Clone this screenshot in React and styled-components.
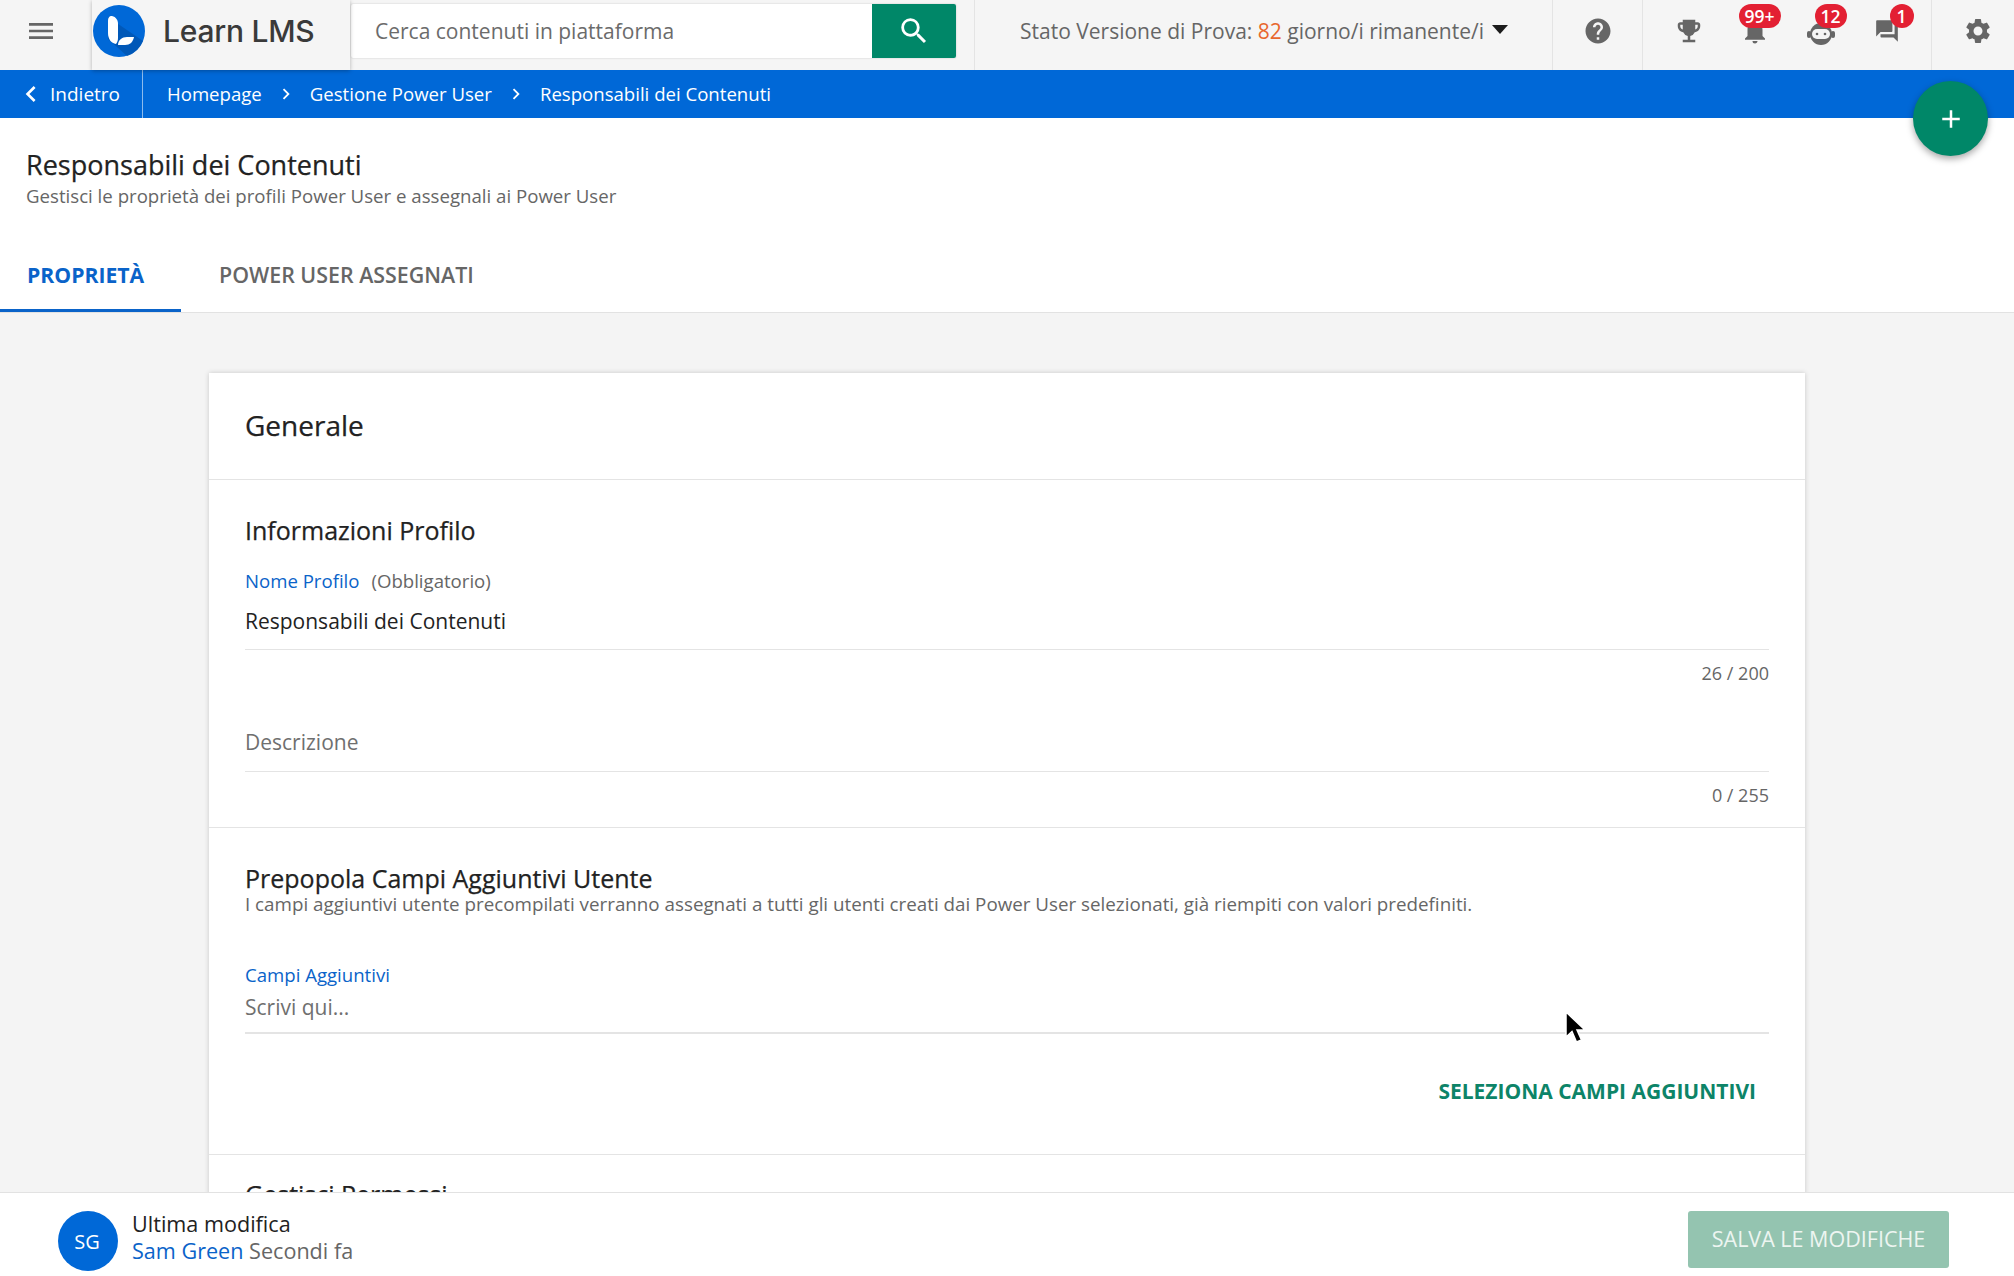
import React from "react";
import styled, { createGlobalStyle, css } from "styled-components";
import {
  MdMenu, MdSearch, MdChevronLeft, MdChevronRight, MdAdd, MdHelp,
  MdEmojiEvents, MdNotifications, MdQuestionAnswer, MdSettings,
} from "react-icons/md";

const Global = createGlobalStyle`
  html, body { margin: 0; padding: 0; height: 100%; }
  body { font-family: "Open Sans", "Liberation Sans", sans-serif; background: #fff; color: #222; }
  * { box-sizing: border-box; }
`;

const headingInk = css`
  font-weight: 500;
  -webkit-text-stroke: 0.25px #222;
  color: #222;
`;

const Page = styled.div`
  position: relative;
  display: flex;
  flex-direction: column;
  width: 100%;
  height: 1276px;
  overflow: hidden;
`;

/* ---------- top bar ---------- */
const TopBar = styled.header`
  display: flex;
  align-items: stretch;
  height: 70px;
  flex: none;
  background: #f5f5f5;
`;
const MenuCell = styled.div`
  width: 92px;
  display: flex;
  align-items: center;
  padding: 0 0 8px 25px;
  color: #666;
`;
const LogoBox = styled.div`
  position: relative;
  z-index: 2;
  width: 258px;
  height: 70px;
  background: #f5f5f5;
  display: flex;
  align-items: center;
  gap: 18px;
  padding: 0 0 8px 1px;
  box-shadow: 0 1px 4px rgba(0, 0, 0, 0.28);
`;
const LogoText = styled.span`
  font-family: Inter, "Open Sans", sans-serif;
  font-size: 30px;
  font-weight: 500;
  letter-spacing: -0.25px;
  color: #3a3a3a;
`;
const SearchForm = styled.div`
  display: flex;
  align-self: flex-start;
  width: 605px;
  height: 54px;
  margin: 4px 0 0 1px;
  background: #fff;
  box-shadow: 0 0 2px rgba(0, 0, 0, 0.2);
  border-radius: 2px;
`;
const SearchText = styled.div`
  flex: 1;
  display: flex;
  align-items: center;
  padding-left: 24px;
  font-size: 21px;
  color: #6b6b6b;
`;
const SearchButton = styled.div`
  width: 84px;
  display: flex;
  align-items: center;
  justify-content: center;
  background: #008768;
  color: #fff;
  border-radius: 0 2px 2px 0;
`;
const Trial = styled.div`
  margin-left: 18px;
  width: 578px;
  border-left: 1px solid #e4e4e4;
  display: flex;
  align-items: center;
  padding: 0 0 9px 45px;
  font-size: 21px;
  color: #666;
  white-space: pre;
`;
const Days = styled.span`
  color: #e8672e;
`;
const Caret = styled.span`
  width: 0;
  height: 0;
  margin-left: 8px;
  margin-bottom: 2px;
  border-left: 8px solid transparent;
  border-right: 8px solid transparent;
  border-top: 9px solid #1c1c1c;
`;
const IconGroup = styled.div`
  width: ${(p) => p.$w}px;
  border-left: 1px solid #e4e4e4;
  display: flex;
  align-items: center;
  justify-content: center;
  color: #666;
  padding-bottom: 8px;
  padding-left: ${(p) => p.$pl || 0}px;
`;
const IconCell = styled.div`
  position: relative;
  width: 66px;
  height: 62px;
  display: flex;
  align-items: center;
  justify-content: center;
`;
const RobotFace = styled.svg`
  margin-top: 5px;
`;
const Badge = styled.span`
  position: absolute;
  top: 4px;
  left: ${(p) => p.$left}px;
  min-width: 24px;
  height: 24px;
  padding: 0 6px;
  border-radius: 12px;
  background: #e32033;
  color: #fff;
  font-size: 17.5px;
  font-weight: 600;
  line-height: 24px;
  text-align: center;
`;

/* ---------- breadcrumb ---------- */
const CrumbBar = styled.nav`
  height: 48px;
  flex: none;
  display: flex;
  align-items: stretch;
  background: #0068d7;
  color: #fff;
  font-size: 18.6px;
  font-weight: 500;
  padding-bottom: 1px;
`;
const BackLink = styled.div`
  width: 143px;
  display: flex;
  align-items: center;
  padding-left: 21px;
  gap: 8px;
  font-size: 19px;
  border-right: 1px solid rgba(255, 255, 255, 0.55);
  margin-bottom: -1px;
`;
const Crumbs = styled.div`
  display: flex;
  align-items: center;
  padding-left: 24px;
  gap: 13px;
`;

const Fab = styled.div`
  position: absolute;
  z-index: 3;
  top: 81px;
  left: 1913px;
  width: 75px;
  height: 75px;
  border-radius: 50%;
  background: #008768;
  color: #fff;
  display: flex;
  align-items: center;
  justify-content: center;
  box-shadow: 0 3px 7px rgba(0, 0, 0, 0.35);
`;

/* ---------- page head ---------- */
const PageHead = styled.div`
  flex: none;
  height: 195px;
  background: #fff;
  border-bottom: 1px solid #e2e2e2;
  display: flex;
  flex-direction: column;
`;
const Title = styled.h1`
  margin: 32px 0 0 26px;
  font-size: 27px;
  line-height: 30px;
  ${headingInk}
`;
const SubTitle = styled.p`
  margin: 1px 0 0 26px;
  font-size: 18.65px;
  line-height: 30px;
  color: #666;
`;
const Tabs = styled.div`
  display: flex;
  margin-top: auto;
`;
const Tab = styled.div`
  height: 72px;
  display: flex;
  align-items: center;
  font-size: ${(p) => (p.$active ? 21.2 : 21.4)}px;
  font-weight: ${(p) => (p.$active ? 700 : 600)};
  width: ${(p) => (p.$active ? "181px" : "auto")};
  padding: ${(p) => (p.$active ? "0 0 0 27px" : "0 0 0 38px")};
  color: ${(p) => (p.$active ? "#0a63c9" : "#666")};
  border-bottom: 3px solid ${(p) => (p.$active ? "#0a63c9" : "transparent")};
`;

/* ---------- content ---------- */
const Main = styled.main`
  flex: 1;
  min-height: 0;
  overflow: hidden;
  background: #f4f4f4;
  padding-top: 60px;
`;
const Card = styled.section`
  width: 1596px;
  margin: 0 auto;
  background: #fff;
  box-shadow: 0 0 5px rgba(0, 0, 0, 0.18);
`;
const CardHead = styled.div`
  height: 107px;
  padding: 0 0 2px 36px;
  display: flex;
  align-items: center;
  border-bottom: 1px solid #e4e4e4;
  font-size: 28px;
  ${headingInk}
`;
const Block = styled.div`
  height: ${(p) => p.$h}px;
  padding: ${(p) => p.$top}px 36px 0;
  border-bottom: 1px solid #e4e4e4;
`;
const BlockTitle = styled.h2`
  margin: 0;
  font-size: 25px;
  line-height: 30px;
  ${headingInk}
`;
const BlockHint = styled.p`
  margin: -1px 0 0;
  font-size: 18.8px;
  line-height: 24px;
  color: #666;
`;
const Label = styled.div`
  display: flex;
  gap: 12px;
  margin-top: ${(p) => p.$mt}px;
  font-size: 18.6px;
  line-height: 24px;
  color: #0a63c9;
`;
const Required = styled.span`
  color: #666;
`;
const Field = styled.div`
  margin-top: ${(p) => p.$mt}px;
  padding-bottom: ${(p) => p.$pb}px;
  border-bottom: ${(p) => p.$line}px solid #e4e4e4;
  font-size: 21px;
  line-height: 30px;
  color: ${(p) => (p.$muted ? "#6f6f6f" : "#222")};
`;
const Count = styled.div`
  margin-top: 11px;
  font-size: 18px;
  line-height: 24px;
  text-align: right;
  color: #666;
`;
const LinkRow = styled.div`
  margin-top: 42px;
  padding-right: 13px;
  text-align: right;
  font-size: 21px;
  line-height: 30px;
  font-weight: 700;
  color: #0d8468;
`;

/* ---------- footer ---------- */
const Footer = styled.footer`
  flex: none;
  height: 84px;
  background: #fff;
  border-top: 1px solid #e2e2e2;
  display: flex;
  align-items: flex-start;
  padding: 18px 65px 0 58px;
  position: relative;
  z-index: 2;
`;
const Avatar = styled.div`
  width: 60px;
  height: 60px;
  border-radius: 50%;
  background: #0068d7;
  color: #fff;
  font-size: 20px;
  padding-right: 2px;
  display: flex;
  align-items: center;
  justify-content: center;
`;
const Meta = styled.div`
  margin: -1px 0 0 14px;
  font-size: 21.6px;
  line-height: 27px;
  color: #222;
`;
const MetaLine = styled.div`
  color: #666;
`;
const MetaName = styled.span`
  color: #0a63c9;
  font-weight: 500;
`;
const SaveButton = styled.div`
  margin-left: auto;
  width: 261px;
  height: 57px;
  border-radius: 3px;
  background: #94c4b0;
  color: #edf5f1;
  font-size: 21.5px;
  font-weight: 500;
  padding-bottom: 2px;
  display: flex;
  align-items: center;
  justify-content: center;
`;
const Cursor = styled.svg`
  position: absolute;
  z-index: 4;
  left: 1563px;
  top: 1010px;
`;

const LogoMark = () => (
  <svg width="52" height="52" viewBox="0 0 52 52">
    <circle cx="26" cy="26" r="26" fill="#0068d7" />
    <path d="M15 12 L50 36 A26 26 0 0 1 34 51 L15 34 Z" fill="#0056b3" opacity="0.85" />
    <path d="M15 16c0-3 1-5 4-5 4 1 6 4 6 8v14c0 2-.5 4-2 6-5-1-8-5-8-11z" fill="#fff" />
    <path d="M25 40c0-5 4-8 9-8h7c-1 5-4 8-9 8z" fill="#fff" />
  </svg>
);

const RobotIcon = () => (
  <RobotFace width="28" height="24" viewBox="0 0 28 24" fill="#666">
    <circle cx="14" cy="12" r="11" />
    <rect x="0" y="9" width="4" height="7" rx="2" />
    <rect x="24" y="9" width="4" height="7" rx="2" />
    <rect x="5" y="7" width="18" height="10" rx="5" fill="#f5f5f5" />
    <circle cx="10" cy="12" r="1.3" />
    <circle cx="18" cy="12" r="1.3" />
  </RobotFace>
);

export default function App() {
  return (
    <>
      <Global />
      <Page>
        <TopBar>
          <MenuCell><MdMenu size={32} /></MenuCell>
          <LogoBox>
            <LogoMark />
            <LogoText>Learn LMS</LogoText>
          </LogoBox>
          <SearchForm>
            <SearchText>Cerca contenuti in piattaforma</SearchText>
            <SearchButton><MdSearch size={34} /></SearchButton>
          </SearchForm>
          <Trial>
            Stato Versione di Prova: <Days>82</Days> giorno/i rimanente/i<Caret />
          </Trial>
          <IconGroup $w={90}><MdHelp size={30} /></IconGroup>
          <IconGroup $w={289} $pl={1}>
            <IconCell><MdEmojiEvents size={30} /></IconCell>
            <IconCell><MdNotifications size={30} /><Badge $left={17}>99+</Badge></IconCell>
            <IconCell><RobotIcon /><Badge $left={27}>12</Badge></IconCell>
            <IconCell><MdQuestionAnswer size={26} /><Badge $left={36}>1</Badge></IconCell>
          </IconGroup>
          <IconGroup $w={82} $pl={10}><MdSettings size={30} /></IconGroup>
        </TopBar>

        <CrumbBar>
          <BackLink><MdChevronLeft size={32} style={{ marginLeft: -6, marginRight: -5 }} />Indietro</BackLink>
          <Crumbs>
            <span>Homepage</span>
            <MdChevronRight size={22} />
            <span>Gestione Power User</span>
            <MdChevronRight size={22} />
            <span>Responsabili dei Contenuti</span>
          </Crumbs>
        </CrumbBar>
        <Fab><MdAdd size={30} /></Fab>

        <PageHead>
          <Title>Responsabili dei Contenuti</Title>
          <SubTitle>Gestisci le proprietà dei profili Power User e assegnali ai Power User</SubTitle>
          <Tabs>
            <Tab $active>PROPRIETÀ</Tab>
            <Tab>POWER USER ASSEGNATI</Tab>
          </Tabs>
        </PageHead>

        <Main>
          <Card>
            <CardHead>Generale</CardHead>
            <Block $h={348} $top={35}>
              <BlockTitle>Informazioni Profilo</BlockTitle>
              <Label $mt={24}>Nome Profilo <Required>(Obbligatorio)</Required></Label>
              <Field $mt={13} $pb={13} $line={1}>Responsabili dei Contenuti</Field>
              <Count>26 / 200</Count>
              <Field $mt={42} $pb={14} $line={1} $muted>Descrizione</Field>
              <Count>0 / 255</Count>
            </Block>
            <Block $h={327} $top={35}>
              <BlockTitle>Prepopola Campi Aggiuntivi Utente</BlockTitle>
              <BlockHint>I campi aggiuntivi utente precompilati verranno assegnati a tutti gli utenti creati dai Power User selezionati, già riempiti con valori predefiniti.</BlockHint>
              <Label $mt={47}>Campi Aggiuntivi</Label>
              <Field $mt={5} $pb={10} $line={2} $muted>Scrivi qui...</Field>
              <LinkRow>SELEZIONA CAMPI AGGIUNTIVI</LinkRow>
            </Block>
            <Block $h={200} $top={24}>
              <BlockTitle>Gestisci Permessi</BlockTitle>
            </Block>
          </Card>
        </Main>

        <Footer>
          <Avatar>SG</Avatar>
          <Meta>
            <div>Ultima modifica</div>
            <MetaLine><MetaName>Sam Green</MetaName> Secondi fa</MetaLine>
          </Meta>
          <SaveButton>SALVA LE MODIFICHE</SaveButton>
        </Footer>
        <Cursor width="26" height="38" viewBox="0 0 26 38">
          <path d="M3 2 L3 27 L9 21.5 L13.5 32 L18.5 30 L14 20 L22 20 Z" fill="#000" stroke="#fff" strokeWidth="1.5" />
        </Cursor>
      </Page>
    </>
  );
}
